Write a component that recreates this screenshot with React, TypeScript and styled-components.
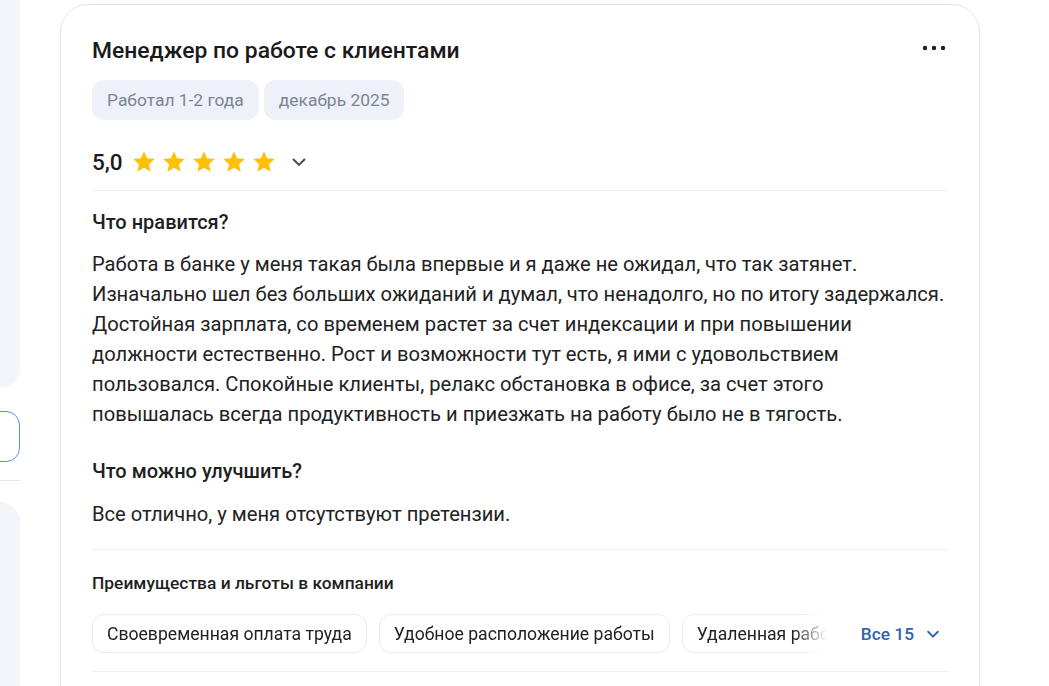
import styled, { createGlobalStyle } from 'styled-components'

const GlobalStyle = createGlobalStyle`
  html, body {
    margin: 0;
    padding: 0;
    background: #ffffff;
    font-family: Roboto, "Noto Sans", "Liberation Sans", sans-serif;
    color: #1f1f1f;
    overflow: hidden;
  }
`

const Page = styled.div`
  display: flex;
  align-items: flex-start;
  gap: 40px;
  width: 1049px;
  height: 686px;
  overflow: hidden;
`

const Sidebar = styled.aside`
  flex: none;
  width: 300px;
  margin-left: -280px;
  display: flex;
  flex-direction: column;
`

const SidePanel = styled.div<{ $height: number; $top?: boolean }>`
  height: ${(p) => p.$height}px;
  background: #f4f5fa;
  border-radius: ${(p) => (p.$top ? '0 0 20px 20px' : '20px')};
`

const SideInput = styled.div`
  height: 49px;
  margin-top: 23px;
  border: 1px solid #5a8ff2;
  border-radius: 14px;
  background: #fff;
`

const SideDivider = styled.div`
  height: 1px;
  margin-top: 18px;
  background: #e2e5ec;
`

const Card = styled.article`
  flex: none;
  width: 920px;
  margin-top: 4px;
  border: 1px solid #e1e5ed;
  border-radius: 28px;
  padding: 32px 30px 40px 31px;
  box-sizing: border-box;
`

const HeadRow = styled.div`
  display: flex;
  align-items: center;
  justify-content: space-between;
`

const Title = styled.h1`
  margin: 0;
  font-size: 22.9px;
  line-height: 28px;
  font-weight: 500;
  color: #1a1a1a;
`

const MoreButton = styled.button`
  border: 0;
  background: none;
  padding: 0;
  margin: -6px 3px 0 0;
  display: flex;
  cursor: pointer;
`

const Tags = styled.div`
  display: flex;
  gap: 5px;
  margin-top: 15px;
`

const Tag = styled.span`
  display: inline-flex;
  align-items: center;
  height: 40px;
  padding: 0 15px;
  border-radius: 12px;
  background: #eef1f7;
  color: #7b8494;
  font-size: 17.4px;
`

const RatingRow = styled.div`
  display: flex;
  align-items: center;
  height: 32px;
  margin-top: 26px;
`

const Score = styled.span`
  font-size: 22.5px;
  font-weight: 500;
  color: #1a1a1a;
  margin-right: 8px;
`

const Stars = styled.div`
  display: flex;
  gap: 4px;
`

const Chevron = styled.span<{ $color: string }>`
  display: inline-flex;
  color: ${(p) => p.$color};
`

const Divider = styled.div<{ $top: number }>`
  height: 1px;
  margin-top: ${(p) => p.$top}px;
  background: #eef0f5;
`

const Heading = styled.h3<{ $top: number }>`
  margin: ${(p) => p.$top}px 0 0;
  font-size: 20px;
  line-height: 26px;
  font-weight: 500;
  color: #1f1f1f;
`

const Body = styled.p<{ $top: number }>`
  margin: ${(p) => p.$top}px 0 0;
  max-width: 855px;
  font-size: 20.17px;
  line-height: 30px;
  color: #222;
`

const SubHeading = styled.h4`
  margin: 21px 0 0;
  font-size: 17.4px;
  line-height: 24px;
  font-weight: 500;
  color: #1f1f1f;
`

const ChipsRow = styled.div`
  display: flex;
  align-items: center;
  margin-top: 19px;
`

const ChipsTrack = styled.div`
  flex: 1;
  min-width: 0;
  display: flex;
  gap: 12px;
  overflow: hidden;
  -webkit-mask-image: linear-gradient(to right, #000 calc(100% - 34px), transparent);
  mask-image: linear-gradient(to right, #000 calc(100% - 34px), transparent);
`

const Chip = styled.span`
  flex: none;
  display: inline-flex;
  align-items: center;
  height: 37px;
  padding: 0 14px;
  border: 1px solid #e7eaf3;
  border-radius: 12px;
  font-size: 17.6px;
  color: #222;
  white-space: nowrap;
`

const AllButton = styled.button`
  flex: none;
  display: flex;
  align-items: center;
  gap: 10px;
  margin-left: 34px;
  padding: 0 7px 0 0;
  border: 0;
  background: none;
  font-family: inherit;
  font-size: 17.3px;
  font-weight: 500;
  color: #3061ad;
  cursor: pointer;
`

const Star = () => (
  <svg width="26" height="26" viewBox="0 0 24 24">
    <path
      fill="#FFC107"
      d="M12 17.27L18.18 21l-1.64-7.03L22 9.24l-7.19-.61L12 2 9.19 8.63 2 9.24l5.46 4.73L5.82 21z"
    />
  </svg>
)

const ChevronDown = ({ size = 20 }: { size?: number }) => (
  <svg width={size} height={size} viewBox="0 0 24 24" fill="none">
    <path d="M5.5 9l6.5 6.5L18.5 9" stroke="currentColor" strokeWidth="2.4" strokeLinecap="round" strokeLinejoin="round" />
  </svg>
)

const benefits = ['Своевременная оплата труда', 'Удобное расположение работы', 'Удаленная работа']

export default function App() {
  return (
    <>
      <GlobalStyle />
      <Page>
        <Sidebar>
          <SidePanel $height={388} $top />
          <SideInput />
          <SideDivider />
          <SidePanel $height={300} style={{ marginTop: 21 }} />
        </Sidebar>

        <Card>
          <HeadRow>
            <Title>Менеджер по работе с клиентами</Title>
            <MoreButton aria-label="Ещё">
              <svg width="24" height="6" viewBox="0 0 24 6">
                <circle cx="3" cy="3" r="2.2" fill="#1f1f1f" />
                <circle cx="12" cy="3" r="2.2" fill="#1f1f1f" />
                <circle cx="21" cy="3" r="2.2" fill="#1f1f1f" />
              </svg>
            </MoreButton>
          </HeadRow>

          <Tags>
            <Tag>Работал 1-2 года</Tag>
            <Tag>декабрь 2025</Tag>
          </Tags>

          <RatingRow>
            <Score>5,0</Score>
            <Stars>
              {[0, 1, 2, 3, 4].map((i) => (
                <Star key={i} />
              ))}
            </Stars>
            <Chevron $color="#4a4a4a" style={{ marginLeft: 12 }}>
              <ChevronDown />
            </Chevron>
          </RatingRow>

          <Divider $top={12} />

          <Heading $top={18}>Что нравится?</Heading>
          <Body $top={14}>
            Работа в банке у меня такая была впервые и я даже не ожидал, что так затянет.
            Изначально шел без больших ожиданий и думал, что ненадолго, но по итогу задержался.
            Достойная зарплата, со временем растет за счет индексации и при повышении
            должности естественно. Рост и возможности тут есть, я ими с удовольствием
            пользовался. Спокойные клиенты, релакс обстановка в офисе, за счет этого
            повышалась всегда продуктивность и приезжать на работу было не в тягость.
          </Body>

          <Heading $top={29}>Что можно улучшить?</Heading>
          <Body $top={15}>Все отлично, у меня отсутствуют претензии.</Body>

          <Divider $top={20} />

          <SubHeading>Преимущества и льготы в компании</SubHeading>
          <ChipsRow>
            <ChipsTrack>
              {benefits.map((b) => (
                <Chip key={b}>{b}</Chip>
              ))}
            </ChipsTrack>
            <AllButton>
              Все 15
              <ChevronDown size={18} />
            </AllButton>
          </ChipsRow>

          <Divider $top={18} />
        </Card>
      </Page>
    </>
  )
}
